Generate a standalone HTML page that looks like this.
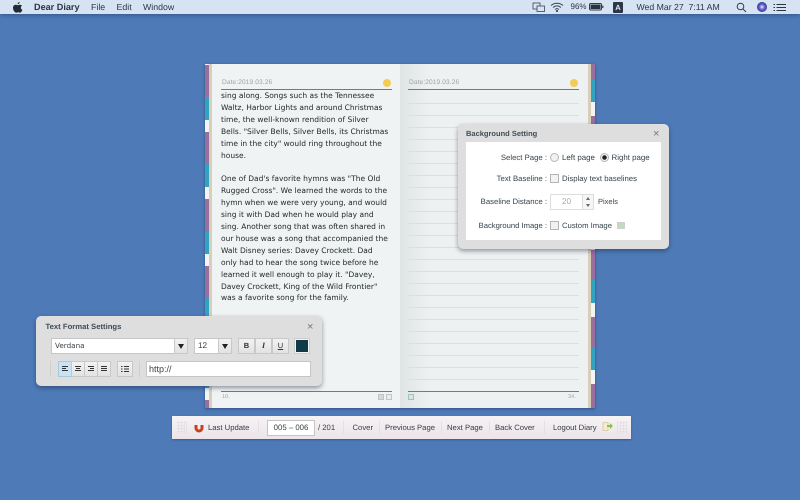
<!DOCTYPE html>
<html><head><meta charset="utf-8"><style>
*{box-sizing:border-box}
html,body{margin:0;padding:0}
body{width:800px;height:500px;overflow:hidden;background:#4e7bb8;position:relative;font-family:"Liberation Sans",sans-serif;color:#3a4248;text-rendering:geometricPrecision}
#w{position:absolute;left:0;top:0;width:800px;height:500px;filter:blur(.3px)}
.a{position:absolute;white-space:nowrap}
#menu{left:0;top:0;width:800px;height:14px;background:#d6e3f3;box-shadow:0 1px 5px rgba(30,50,90,.55)}
.m{position:absolute;top:1px;font-size:8.8px;line-height:12px;color:#2c3440;white-space:nowrap}
.book{left:205px;top:64px;width:390px;height:344px;background:#eef1f1;box-shadow:0 1px 3px rgba(20,40,80,.5)}
.tabL{left:205px;top:64px;width:3.5px;height:344px;background:linear-gradient(180deg,#9a6f9c 0,#9a6f9c 32px,#2fa3bf 32px,#2fa3bf 55px,#f4f4f2 55px,#f4f4f2 67px) 0 1px/4px 67px repeat-y}
.tabR{left:591px;top:64px;width:4px;height:344px;background:linear-gradient(180deg,#9a6f9c 0,#9a6f9c 30px,#2fa3bf 30px,#2fa3bf 53px,#f4f4f2 53px,#f4f4f2 67px) 0 -15px/4px 67px repeat-y}
.txt{left:221px;top:90px;font-family:"DejaVu Sans",sans-serif;font-size:7.5px;line-height:11.9px;color:#1f2528;white-space:pre}
.date{font-family:"Liberation Sans",sans-serif;font-size:6.6px;color:#a0a3a3;letter-spacing:.1px}
.dot{width:8px;height:8px;border-radius:50%;background:#f2cc55}
.ln{height:1px;background:#dcdfdf;left:408px;width:171px}
.panel{background:#dedede;border-radius:5px;box-shadow:0 2px 5px rgba(20,30,60,.45)}
.t{font-size:7.75px;color:#36444c;line-height:10px}
.title{font-weight:bold;color:#3f4d55;line-height:10px}
.btn{background:linear-gradient(#f2f2f2,#e2e2e2);border:1px solid #c8c8c8;height:16px;text-align:center;font-size:8px;line-height:14px;color:#333}
.box{background:#fff;border:1px solid #c6c6c6}
.sep{width:1px;background:#e4e0e4;top:421px;height:13px}
.tb{font-size:7.7px;color:#353d42;top:423px;line-height:10px}
</style></head><body><div id="w">
<div class="a" id="menu"></div>
<svg class="a" style="left:13px;top:2px" width="10" height="11" viewBox="0 0 10 11"><path fill="#222a36" d="M6.6 0c.1 1-.8 2.200-2 2.100C4.500 1 5.500.1 6.600 0zM2.900 2.700c.8 0 1.300.5 2 .5s1.200-.5 2.100-.5c.7 0 1.500.4 2 1.100-1.700 1-1.400 3.400.4 4.100-.5 1.300-1.400 2.800-2.400 2.800-.7 0-1-.4-1.900-.4s-1.200.4-1.900.4C1.600 10.700 0 8 0 5.800c0-2 1.300-3.100 2.900-3.100z"/></svg>
<div class="m" style="left:34px;font-weight:bold;font-size:9.100px">Dear Diary</div>
<div class="m" style="left:91px">File</div>
<div class="m" style="left:116.500px">Edit</div>
<div class="m" style="left:143px">Window</div>
<svg class="a" style="left:532px;top:2px" width="14" height="10" fill="none" stroke="#3a4450" stroke-width=".8"><rect x="1" y="1" width="7" height="6"/><rect x="5" y="4" width="7.500" height="5.500" fill="#d6e3f3"/></svg>
<svg class="a" style="left:550px;top:2px" width="14" height="10" fill="none" stroke="#3a4450" stroke-width="1"><path d="M1 3.500C4.500.5 9.500.5 13 3.500M3 5.500C5.500 3.500 8.500 3.500 11 5.500M5 7.500C6.200 6.500 7.800 6.500 9 7.500"/><circle cx="7" cy="9" r=".6" fill="#3a4450"/></svg>
<div class="m" style="left:570.500px;font-size:8px">96%</div>
<svg class="a" style="left:589px;top:3px" width="15" height="8"><rect x=".5" y=".5" width="12" height="6.500" rx="1.200" fill="none" stroke="#333c48"/><rect x="1.500" y="1.500" width="10" height="4.500" fill="#2a3240"/><rect x="13.200" y="2.500" width="1.200" height="2.500" fill="#333c48"/></svg>
<div class="a" style="left:613px;top:2px;width:10px;height:11px;background:#2c3648;border-radius:1px;color:#e8eef6;font-size:7.500px;font-weight:bold;text-align:center;line-height:11px">A</div>
<div class="m" style="left:636.500px;font-size:8.700px">Wed Mar 27&nbsp; 7:11 AM</div>
<svg class="a" style="left:736px;top:2px" width="11" height="11" fill="none" stroke="#333c48" stroke-width="1"><circle cx="4.500" cy="4.500" r="3.300"/><path d="M7 7l3 3"/></svg>
<div class="a" style="left:757px;top:2px;width:10px;height:10px;border-radius:50%;background:radial-gradient(circle at 50% 50%,#e8f0ff 0,#7a5fd0 35%,#23408f 70%,#1a2a60 100%)"></div>
<svg class="a" style="left:773px;top:3px" width="13" height="9" stroke="#2c3440" stroke-width="1"><path d="M3.500 1.500H13M3.500 4.500H13M3.500 7.500H13M.5 1.500H2M.5 4.500H2M.5 7.500H2"/></svg>

<div class="a book"></div>
<div class="a tabL"></div>
<div class="a tabR"></div>
<div class="a" style="left:208.500px;top:64px;width:3.500px;height:344px;background:#d8cfba"></div>
<div class="a" style="left:212px;top:64px;width:188px;height:344px;background:#f0f3f3"></div>
<div class="a" style="left:400px;top:64px;width:30px;height:344px;background:linear-gradient(90deg,#dfe4e4,#eef1f1)"></div>
<div class="a" style="left:588px;top:64px;width:3px;height:344px;background:#d8cfba"></div>

<div class="a date" style="left:222px;top:78.500px">Date:2019.03.26</div>
<div class="a dot" style="left:383px;top:79px"></div>
<div class="a" style="left:221px;top:89px;width:171px;height:1px;background:#77797a"></div>
<div class="a date" style="left:409px;top:78.500px">Date:2019.03.26</div>
<div class="a dot" style="left:570px;top:79px"></div>
<div class="a" style="left:408px;top:89px;width:171px;height:1px;background:#77797a"></div>
<div class="a ln" style="top:103px"></div><div class="a ln" style="top:115px"></div><div class="a ln" style="top:127px"></div><div class="a ln" style="top:139px"></div><div class="a ln" style="top:151px"></div><div class="a ln" style="top:163px"></div><div class="a ln" style="top:175px"></div><div class="a ln" style="top:187px"></div><div class="a ln" style="top:199px"></div><div class="a ln" style="top:211px"></div><div class="a ln" style="top:223px"></div><div class="a ln" style="top:235px"></div><div class="a ln" style="top:247px"></div><div class="a ln" style="top:259px"></div><div class="a ln" style="top:271px"></div><div class="a ln" style="top:283px"></div><div class="a ln" style="top:295px"></div><div class="a ln" style="top:307px"></div><div class="a ln" style="top:319px"></div><div class="a ln" style="top:331px"></div><div class="a ln" style="top:343px"></div><div class="a ln" style="top:355px"></div><div class="a ln" style="top:367px"></div><div class="a ln" style="top:379px"></div>

<div class="a txt">sing along. Songs such as the Tennessee
Waltz, Harbor Lights and around Christmas
time, the well-known rendition of Silver
Bells. "Silver Bells, Silver Bells, its Christmas
time in the city" would ring throughout the
house.

One of Dad's favorite hymns was "The Old
Rugged Cross". We learned the words to the
hymn when we were very young, and would
sing it with Dad when he would play and
sing. Another song that was often shared in
our house was a song that accompanied the
Walt Disney series: Davey Crockett. Dad
only had to hear the song twice before he
learned it well enough to play it. "Davey,
Davey Crockett, King of the Wild Frontier"
was a favorite song for the family.</div>

<div class="a" style="left:221px;top:391px;width:171px;height:1px;background:#77797a"></div>
<div class="a" style="left:408px;top:391px;width:171px;height:1px;background:#77797a"></div>
<div class="a date" style="left:222px;top:394px;font-size:5.500px">10.</div>
<div class="a date" style="left:568px;top:394px;font-size:5.500px">34.</div>
<div class="a" style="left:378px;top:394px;width:6px;height:6px;background:#d4d9d9;border:1px solid #c0c6c8"></div>
<div class="a" style="left:386px;top:394px;width:6px;height:6px;background:#e9ecec;border:1px solid #c0c6c8"></div>
<div class="a" style="left:408px;top:394px;width:6px;height:6px;background:#d8e6e0;border:1px solid #a4c0b8"></div>

<div class="a panel" style="left:458px;top:124px;width:211px;height:125px"></div>
<div class="a title" style="left:466px;top:129px;font-size:7.500px">Background Setting</div>
<div class="a" style="left:653px;top:128px;font-size:11px;line-height:12px;color:#777">×</div>
<div class="a" style="left:466px;top:142px;width:195px;height:98px;background:#fff"></div>
<div class="a t" style="right:253px;top:153px">Select Page :</div>
<div class="a" style="left:550px;top:153px;width:9px;height:9px;border-radius:50%;background:#f2f2f2;border:1px solid #b5b5b5"></div>
<div class="a t" style="left:562px;top:153px;font-size:7.900px">Left page</div>
<div class="a" style="left:600px;top:153px;width:9px;height:9px;border-radius:50%;background:radial-gradient(circle,#222 0,#222 2px,#f2f2f2 2.500px);border:1px solid #b5b5b5"></div>
<div class="a t" style="left:611.500px;top:153px;font-size:7.900px">Right page</div>
<div class="a t" style="right:253px;top:174px">Text Baseline :</div>
<div class="a" style="left:550px;top:174px;width:9px;height:9px;background:#f2f2f2;border:1px solid #b5b5b5"></div>
<div class="a t" style="left:562px;top:174px">Display text baselines</div>
<div class="a t" style="right:253px;top:196.500px">Baseline Distance :</div>
<div class="a box" style="left:550px;top:194px;width:44px;height:16px;border-color:#ddd;color:#aaa;font-size:8.200px;line-height:14px;padding-left:11px">20</div>
<div class="a" style="left:582px;top:194px;width:12px;height:16px;border:1px solid #ddd;background:#f6f6f6"></div>
<div class="a" style="left:586px;top:197px;border:2.500px solid transparent;border-bottom:3px solid #666;border-top:0"></div>
<div class="a" style="left:586px;top:204px;border:2.500px solid transparent;border-top:3px solid #666;border-bottom:0"></div>
<div class="a t" style="left:598px;top:197px;font-size:7.500px">Pixels</div>
<div class="a t" style="right:253px;top:221px;font-size:7.650px">Background Image :</div>
<div class="a" style="left:550px;top:221px;width:9px;height:9px;background:#f2f2f2;border:1px solid #b5b5b5"></div>
<div class="a t" style="left:562px;top:221px;font-size:7.700px">Custom Image</div>
<div class="a" style="left:617px;top:222px;width:8px;height:7px;background:#c6d8c0;border:1px solid #c9d2d2"></div>

<div class="a panel" style="left:36px;top:316px;width:286px;height:70px"></div>
<div class="a title" style="left:45.500px;top:321.500px;font-size:7.700px">Text Format Settings</div>
<div class="a" style="left:307px;top:321px;font-size:11px;line-height:12px;color:#777">×</div>
<div class="a box" style="left:51px;top:338px;width:124px;height:16px;line-height:14px;padding-left:3px;font-family:'DejaVu Sans',sans-serif;font-size:7.200px">Verdana</div>
<div class="a btn" style="left:174px;top:338px;width:14px"><span style="display:block;margin:5px auto 0;width:0;border:3.500px solid transparent;border-top:5px solid #222;border-bottom:0"></span></div>
<div class="a box" style="left:194px;top:338px;width:25px;height:16px;line-height:14px;padding-left:3px;font-size:8.200px">12</div>
<div class="a btn" style="left:218px;top:338px;width:14px"><span style="display:block;margin:5px auto 0;width:0;border:3.500px solid transparent;border-top:5px solid #222;border-bottom:0"></span></div>
<div class="a btn" style="left:238px;top:338px;width:17px;font-weight:bold;font-size:7.500px">B</div>
<div class="a btn" style="left:255px;top:338px;width:17px;font-style:italic;font-weight:bold;font-family:'Liberation Serif',serif">I</div>
<div class="a btn" style="left:272px;top:338px;width:17px;text-decoration:underline;font-size:7.500px">U</div>
<div class="a box" style="left:294px;top:338px;width:16px;height:16px;border:2px solid #f4f4f4;outline:1px solid #ccc;outline-offset:-1px;background:#103a48"></div>
<div class="a" style="left:50px;top:361px;width:1px;height:16px;background:#cfcfcf"></div>
<div class="a" style="left:139px;top:361px;width:1px;height:16px;background:#cfcfcf"></div>
<div class="a btn" style="left:58px;top:361px;width:14px;background:#c8e3f6;border-color:#aac8dc"></div>
<div class="a btn" style="left:71px;top:361px;width:14px"></div>
<div class="a btn" style="left:84px;top:361px;width:14px"></div>
<div class="a btn" style="left:97px;top:361px;width:14px"></div>
<svg class="a" style="left:58px;top:361px" width="54" height="16" stroke="#333" stroke-width="1"><path d="M4 5.500h6M4 7.500h4M4 9.500h6M17 5.500h6M18 7.500h4M17 9.500h6M30 5.500h6M32 7.500h4M30 9.500h6M43 5.500h6M43 7.500h6M43 9.500h6"/></svg>
<div class="a btn" style="left:117px;top:361px;width:16px"></div>
<svg class="a" style="left:117px;top:361px" width="16" height="16" stroke="#333" stroke-width="1"><path d="M4 5.500h1.500M7 5.500h5M4 8h1.500M7 8h5M4 10.500h1.500M7 10.500h5"/></svg>
<div class="a box" style="left:146px;top:361px;width:165px;height:16px;line-height:14px;padding-left:2px;font-size:9px">http://</div>

<div class="a" style="left:172px;top:416px;width:459px;height:23px;background:linear-gradient(#f6f3f5,#ebe4ea);box-shadow:0 1px 2px rgba(20,30,60,.35)"></div>
<div class="a" style="left:177px;top:421px;width:8px;height:13px;background-image:radial-gradient(#dedade .8px,transparent 1px);background-size:3px 3px"></div>
<div class="a" style="left:619px;top:421px;width:8px;height:13px;background-image:radial-gradient(#dedade .8px,transparent 1px);background-size:3px 3px"></div>
<div class="a sep" style="left:186px"></div><div class="a sep" style="left:258px"></div><div class="a sep" style="left:343px"></div><div class="a sep" style="left:379px"></div><div class="a sep" style="left:441px"></div><div class="a sep" style="left:489px"></div><div class="a sep" style="left:544px"></div><div class="a sep" style="left:617px"></div>
<svg class="a" style="left:194px;top:423px" width="10" height="10"><path fill="#c8401e" d="M.5 .5h3v4.500a1.500 1.500 0 0 0 3 0V.5h3V5a4.500 4.500 0 0 1-9 0z"/><path fill="#eee" d="M.5 .5h3v1.500h-3zM6.500 .5h3v1.500h-3z"/></svg>
<div class="a tb" style="left:208px">Last Update</div>
<div class="a box" style="left:267px;top:420px;width:48px;height:15.500px;border-color:#c4c4c4;font-size:7.800px;line-height:14px;text-align:center">005 – 006</div>
<div class="a tb" style="left:318px">/ 201</div>
<div class="a tb" style="left:352.500px">Cover</div>
<div class="a tb" style="left:385px">Previous Page</div>
<div class="a tb" style="left:447px">Next Page</div>
<div class="a tb" style="left:495px">Back Cover</div>
<div class="a tb" style="left:553px">Logout Diary</div>
<svg class="a" style="left:602px;top:422px" width="11" height="10"><path d="M1 .5h5v8H1z" fill="#f3ecd8" stroke="#d9c88c" stroke-width=".8"/><path d="M5 3h3V1l3 3-3 3V5H5z" fill="#8cc04a"/></svg>
</div></body></html>
